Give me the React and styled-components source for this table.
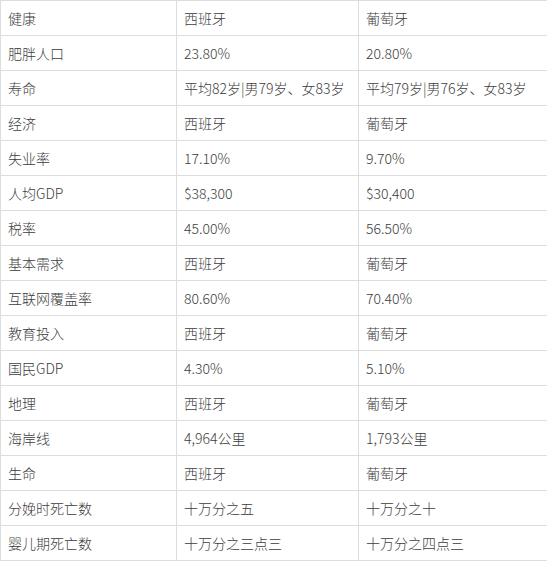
import React from 'react';
import styled, { createGlobalStyle } from 'styled-components';

const GlobalStyle = createGlobalStyle`
  html, body {
    margin: 0;
    padding: 0;
    background: #fff;
  }
  body {
    font-family: "Microsoft YaHei", "Noto Sans CJK SC", "Noto Sans", sans-serif;
    overflow: hidden;
  }
`;

const Table = styled.table`
  border-collapse: collapse;
  table-layout: fixed;
  width: 549px;
  color: #3c3c3c;
  font-size: 14px;
`;

const Col = styled.col`
  width: ${({ $w }) => $w}px;
`;

const Row = styled.tr`
  height: 35px;
`;

const Cell = styled.td`
  border: 1px solid #ddd;
  padding: 0 7px;
  white-space: nowrap;
  vertical-align: middle;
  line-height: 20px;
  font-weight: 300;
`;

const widths = [176, 182, 191];

const rows = [
  ['健康', '西班牙', '葡萄牙'],
  ['肥胖人口', '23.80%', '20.80%'],
  ['寿命', '平均82岁|男79岁、女83岁', '平均79岁|男76岁、女83岁'],
  ['经济', '西班牙', '葡萄牙'],
  ['失业率', '17.10%', '9.70%'],
  ['人均GDP', '$38,300', '$30,400'],
  ['税率', '45.00%', '56.50%'],
  ['基本需求', '西班牙', '葡萄牙'],
  ['互联网覆盖率', '80.60%', '70.40%'],
  ['教育投入', '西班牙', '葡萄牙'],
  ['国民GDP', '4.30%', '5.10%'],
  ['地理', '西班牙', '葡萄牙'],
  ['海岸线', '4,964公里', '1,793公里'],
  ['生命', '西班牙', '葡萄牙'],
  ['分娩时死亡数', '十万分之五', '十万分之十'],
  ['婴儿期死亡数', '十万分之三点三', '十万分之四点三'],
];

export default function App() {
  return (
    <>
      <GlobalStyle />
      <Table>
        <colgroup>
          {widths.map((w, i) => (
            <Col key={i} $w={w} />
          ))}
        </colgroup>
        <tbody>
          {rows.map((r) => (
            <Row key={r[0]}>
              {r.map((c, i) => (
                <Cell key={i}>{c}</Cell>
              ))}
            </Row>
          ))}
        </tbody>
      </Table>
    </>
  );
}
